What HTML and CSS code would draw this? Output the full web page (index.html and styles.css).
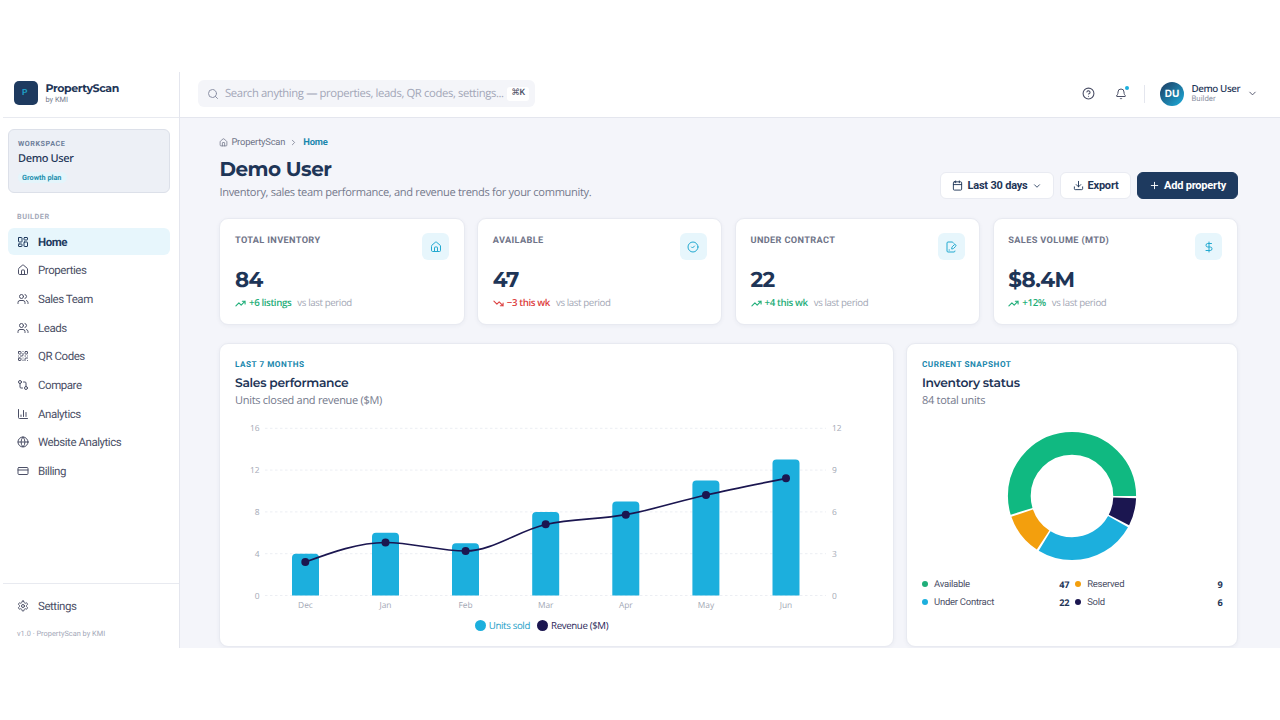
FILE: index.html
```
<!DOCTYPE html>
<html lang="en">
<head>
  <meta charset="UTF-8" />
  <meta name="viewport" content="width=device-width, initial-scale=1" />
  <title>PropertyScan - Home</title>
  <link rel="stylesheet" href="styles.css">
</head>
<body>

  <!-- Shared icons -->
  <svg class="sprite">
    <symbol id="i-dash" viewBox="0 0 24 24"><rect x="3" y="3" width="7" height="9" rx="1"/><rect x="14" y="3" width="7" height="5" rx="1"/><rect x="14" y="12" width="7" height="9" rx="1"/><rect x="3" y="16" width="7" height="5" rx="1"/></symbol>
    <symbol id="i-home" viewBox="0 0 24 24"><path d="M15 21v-8a1 1 0 0 0-1-1h-4a1 1 0 0 0-1 1v8"/><path d="M3 10a2 2 0 0 1 .7-1.5l7-6a2 2 0 0 1 2.6 0l7 6A2 2 0 0 1 21 10v9a2 2 0 0 1-2 2H5a2 2 0 0 1-2-2z"/></symbol>
    <symbol id="i-users" viewBox="0 0 24 24"><path d="M16 21v-2a4 4 0 0 0-4-4H6a4 4 0 0 0-4 4v2"/><circle cx="9" cy="7" r="4"/><path d="M22 21v-2a4 4 0 0 0-3-3.900M16 3.100a4 4 0 0 1 0 7.800"/></symbol>
    <symbol id="i-qr" viewBox="0 0 24 24"><rect x="3" y="3" width="5" height="5" rx="1"/><rect x="16" y="3" width="5" height="5" rx="1"/><rect x="3" y="16" width="5" height="5" rx="1"/><path d="M21 16h-3a2 2 0 0 0-2 2v3M21 21v.01M12 7v3a2 2 0 0 1-2 2H7M3 12h.01M12 3h.01M12 16v.01M16 12h1M21 12v.01M12 21v-1"/></symbol>
    <symbol id="i-compare" viewBox="0 0 24 24"><circle cx="18" cy="18" r="3"/><circle cx="6" cy="6" r="3"/><path d="M13 6h3a2 2 0 0 1 2 2v7M11 18H8a2 2 0 0 1-2-2V9"/></symbol>
    <symbol id="i-chart" viewBox="0 0 24 24"><path d="M3 3v16a2 2 0 0 0 2 2h16M18 17V9M13 17V5M8 17v-3"/></symbol>
    <symbol id="i-globe" viewBox="0 0 24 24"><circle cx="12" cy="12" r="10"/><path d="M12 2a14.5 14.5 0 0 0 0 20 14.5 14.5 0 0 0 0-20M2 12h20"/></symbol>
    <symbol id="i-card" viewBox="0 0 24 24"><rect x="2" y="5" width="20" height="14" rx="2"/><path d="M2 10h20"/></symbol>
    <symbol id="i-gear" viewBox="0 0 24 24"><path d="M12.2 2h-.4a2 2 0 0 0-2 2v.2a2 2 0 0 1-1 1.7l-.5.3a2 2 0 0 1-2 0l-.1-.1a2 2 0 0 0-2.7.7l-.3.4a2 2 0 0 0 .8 2.7l.1.1a2 2 0 0 1 1 1.7v.5a2 2 0 0 1-1 1.8l-.1.1a2 2 0 0 0-.8 2.7l.3.4a2 2 0 0 0 2.7.7l.1-.1a2 2 0 0 1 2 0l.5.3a2 2 0 0 1 1 1.7v.2a2 2 0 0 0 2 2h.4a2 2 0 0 0 2-2v-.2a2 2 0 0 1 1-1.7l.5-.3a2 2 0 0 1 2 0l.1.1a2 2 0 0 0 2.7-.7l.3-.4a2 2 0 0 0-.8-2.7l-.1-.1a2 2 0 0 1-1-1.8v-.5a2 2 0 0 1 1-1.7l.1-.1a2 2 0 0 0 .8-2.7l-.3-.4a2 2 0 0 0-2.7-.7l-.1.1a2 2 0 0 1-2 0l-.5-.3a2 2 0 0 1-1-1.7V4a2 2 0 0 0-2-2z"/><circle cx="12" cy="12" r="3"/></symbol>
    <symbol id="i-search" viewBox="0 0 24 24"><circle cx="11" cy="11" r="8"/><path d="m21 21-4.3-4.3"/></symbol>
    <symbol id="i-help" viewBox="0 0 24 24"><circle cx="12" cy="12" r="10"/><path d="M9.1 9a3 3 0 0 1 5.8 1c0 2-3 3-3 3M12 17h.01"/></symbol>
    <symbol id="i-bell" viewBox="0 0 24 24"><path d="M10.3 21a2 2 0 0 0 3.4 0"/><path d="M3.3 15.3A1 1 0 0 0 4 17h16a1 1 0 0 0 .7-1.7C19.4 14 18 12.5 18 8A6 6 0 0 0 6 8c0 4.5-1.4 6-2.7 7.3"/></symbol>
    <symbol id="i-down" viewBox="0 0 24 24"><path d="m6 9 6 6 6-6"/></symbol>
    <symbol id="i-right" viewBox="0 0 24 24"><path d="m9 18 6-6-6-6"/></symbol>
    <symbol id="i-cal" viewBox="0 0 24 24"><path d="M8 2v4M16 2v4M3 10h18"/><rect x="3" y="4" width="18" height="18" rx="2"/></symbol>
    <symbol id="i-export" viewBox="0 0 24 24"><path d="M21 15v4a2 2 0 0 1-2 2H5a2 2 0 0 1-2-2v-4M7 10l5 5 5-5M12 15V3"/></symbol>
    <symbol id="i-plus" viewBox="0 0 24 24"><path d="M5 12h14M12 5v14"/></symbol>
    <symbol id="i-check" viewBox="0 0 24 24"><circle cx="12" cy="12" r="10"/><path d="m9 12 2 2 4-4"/></symbol>
    <symbol id="i-sign" viewBox="0 0 24 24"><path d="m18 5-2.4-2.4A2 2 0 0 0 14.2 2H6a2 2 0 0 0-2 2v16a2 2 0 0 0 2 2h12a2 2 0 0 0 2-2"/><path d="M21.4 10.6a1 1 0 0 0-3-3l-4 4a2 2 0 0 0-.5.9l-.8 2.9a.5.5 0 0 0 .6.6l2.9-.8a2 2 0 0 0 .9-.5z"/><path d="M8 18h1"/></symbol>
    <symbol id="i-dollar" viewBox="0 0 24 24"><path d="M12 2v20M17 5H9.5a3.5 3.5 0 0 0 0 7h5a3.5 3.5 0 0 1 0 7H6"/></symbol>
    <symbol id="i-up" viewBox="0 0 24 24"><path d="m22 7-8.5 8.5-5-5L2 17M16 7h6v6"/></symbol>
    <symbol id="i-fall" viewBox="0 0 24 24"><path d="m22 17-8.5-8.5-5 5L2 7M16 17h6v-6"/></symbol>
  </svg>

  <div class="app">
    <aside class="sidebar">
      <div class="brand">
        <div class="logo">P</div>
        <div>
          <div class="brand-name">PropertyScan</div>
          <div class="brand-by">by KMI</div>
        </div>
      </div>

      <div class="workspace">
        <div class="ws-label">WORKSPACE</div>
        <div class="ws-name">Demo User</div>
        <span class="ws-plan">Growth plan</span>
      </div>

      <div class="nav-label">BUILDER</div>
      <nav>
        <a class="active"><svg><use href="#i-dash"/></svg>Home</a>
        <a><svg><use href="#i-home"/></svg>Properties</a>
        <a><svg><use href="#i-users"/></svg>Sales Team</a>
        <a><svg><use href="#i-users"/></svg>Leads</a>
        <a><svg><use href="#i-qr"/></svg>QR Codes</a>
        <a><svg><use href="#i-compare"/></svg>Compare</a>
        <a><svg><use href="#i-chart"/></svg>Analytics</a>
        <a><svg><use href="#i-globe"/></svg>Website Analytics</a>
        <a><svg><use href="#i-card"/></svg>Billing</a>
      </nav>

      <div class="side-foot">
        <nav><a><svg><use href="#i-gear"/></svg>Settings</a></nav>
        <p>v1.0 · PropertyScan by KMI</p>
      </div>
    </aside>

    <div class="page">
      <header class="topbar">
        <div class="search">
          <svg><use href="#i-search"/></svg>
          <span>Search anything — properties, leads, QR codes, settings...</span>
          <kbd>⌘K</kbd>
        </div>
        <div class="top-right">
          <svg class="help"><use href="#i-help"/></svg>
          <div class="bell"><svg><use href="#i-bell"/></svg><i></i></div>
          <div class="sep"></div>
          <div class="avatar">DU</div>
          <div class="user">
            <div class="user-name">Demo User</div>
            <div class="user-role">Builder</div>
          </div>
          <svg class="caret"><use href="#i-down"/></svg>
        </div>
      </header>

      <main>
        <div class="crumbs">
          <svg><use href="#i-home"/></svg><span>PropertyScan</span>
          <svg class="crumb-sep"><use href="#i-right"/></svg><b>Home</b>
        </div>

        <div class="head">
          <div>
            <h1>Demo User</h1>
            <p>Inventory, sales team performance, and revenue trends for your community.</p>
          </div>
          <div class="actions">
            <button class="range"><svg><use href="#i-cal"/></svg>Last 30 days<svg class="small"><use href="#i-down"/></svg></button>
            <button class="export"><svg><use href="#i-export"/></svg>Export</button>
            <button class="primary"><svg><use href="#i-plus"/></svg>Add property</button>
          </div>
        </div>

        <div class="stats">
          <div class="card stat">
            <div class="stat-top"><h3>TOTAL INVENTORY</h3><div class="stat-icon"><svg><use href="#i-home"/></svg></div></div>
            <div class="value">84</div>
            <div class="trend"><svg><use href="#i-up"/></svg><b>+6 listings</b><span>vs last period</span></div>
          </div>
          <div class="card stat">
            <div class="stat-top"><h3>AVAILABLE</h3><div class="stat-icon"><svg><use href="#i-check"/></svg></div></div>
            <div class="value">47</div>
            <div class="trend down"><svg><use href="#i-fall"/></svg><b>−3 this wk</b><span>vs last period</span></div>
          </div>
          <div class="card stat">
            <div class="stat-top"><h3>UNDER CONTRACT</h3><div class="stat-icon"><svg><use href="#i-sign"/></svg></div></div>
            <div class="value">22</div>
            <div class="trend"><svg><use href="#i-up"/></svg><b>+4 this wk</b><span>vs last period</span></div>
          </div>
          <div class="card stat">
            <div class="stat-top"><h3>SALES VOLUME (MTD)</h3><div class="stat-icon"><svg><use href="#i-dollar"/></svg></div></div>
            <div class="value">$8.4M</div>
            <div class="trend"><svg><use href="#i-up"/></svg><b>+12%</b><span>vs last period</span></div>
          </div>
        </div>

        <div class="charts">
          <section class="card panel">
            <div class="eyebrow">LAST 7 MONTHS</div>
            <h2>Sales performance</h2>
            <p>Units closed and revenue ($M)</p>
            <svg class="combo" viewBox="235 418 644 196">
              <g class="grid">
                <path d="M265 428.3H826M265 470.1H826M265 511.9H826M265 553.7H826M265 595.5H826"/>
              </g>
              <g class="bars">
                <path d="M292 595.5V557.7q0-4 4-4h19q4 0 4 4v37.8z"/>
                <path d="M372 595.5V536.8q0-4 4-4h19q4 0 4 4v58.7z"/>
                <path d="M452 595.5V547.3q0-4 4-4h19q4 0 4 4v48.2z"/>
                <path d="M532.2 595.5V515.9q0-4 4-4h19q4 0 4 4v79.6z"/>
                <path d="M612.3 595.5V505.4q0-4 4-4h19q4 0 4 4v90.1z"/>
                <path d="M692.4 595.5V484.5q0-4 4-4h19q4 0 4 4v111z"/>
                <path d="M772.5 595.5V463.6q0-4 4-4h19q4 0 4 4v131.9z"/>
              </g>
              <path class="line" d="M305.3 562C332 552.2 358.8 542.5 385.5 542.5C412.2 542.5 438.9 551 465.6 551C492.3 551 519 530.5 545.7 524.5C572.4 518.4 599.1 519.6 625.8 514.7C652.5 509.8 679.2 501 706 495C732.7 489 759.4 483.7 786 478.4"/>
              <g class="dots">
                <circle cx="305.3" cy="562" r="4"/><circle cx="385.5" cy="542.5" r="4"/><circle cx="465.6" cy="551" r="4"/><circle cx="545.7" cy="524.3" r="4"/><circle cx="625.8" cy="514.7" r="4"/><circle cx="706" cy="495" r="4"/><circle cx="786" cy="478.3" r="4"/>
              </g>
              <g class="axis end">
                <text x="259.5" y="431.3">16</text><text x="259.5" y="473.1">12</text><text x="259.5" y="514.9">8</text><text x="259.5" y="556.7">4</text><text x="259.5" y="598.5">0</text>
              </g>
              <g class="axis">
                <text x="832" y="431.3">12</text><text x="832" y="473.1">9</text><text x="832" y="514.9">6</text><text x="832" y="556.7">3</text><text x="832" y="598.5">0</text>
              </g>
              <g class="axis mid">
                <text x="305.5" y="607.5">Dec</text><text x="385.5" y="607.5">Jan</text><text x="465.6" y="607.5">Feb</text><text x="545.7" y="607.5">Mar</text><text x="625.8" y="607.5">Apr</text><text x="706" y="607.5">May</text><text x="786" y="607.5">Jun</text>
              </g>
            </svg>
            <div class="chart-legend"><i class="blue"></i><span class="units">Units sold</span><i class="navy"></i><span>Revenue ($M)</span></div>
          </section>

          <section class="card panel">
            <div class="eyebrow">CURRENT SNAPSHOT</div>
            <h2>Inventory status</h2>
            <p>84 total units</p>
            <!-- arc lengths in degrees, 2 degrees between slices -->
            <svg class="donut" viewBox="-66 -66 132 132">
              <circle class="s-sold" r="52.7" pathLength="360" stroke-dasharray="25.1 334.9" stroke-dashoffset="-2"/>
              <circle class="s-under" r="52.7" pathLength="360" stroke-dasharray="92.2 267.8" stroke-dashoffset="-29.1"/>
              <circle class="s-res" r="52.7" pathLength="360" stroke-dasharray="37.7 322.3" stroke-dashoffset="-123.3"/>
              <circle class="s-avail" r="52.7" pathLength="360" stroke-dasharray="197 163" stroke-dashoffset="-163"/>
            </svg>
            <div class="legend">
              <div><i class="green"></i>Available<b>47</b></div>
              <div><i class="amber"></i>Reserved<b>9</b></div>
              <div><i class="blue"></i>Under Contract<b>22</b></div>
              <div><i class="navy"></i>Sold<b>6</b></div>
            </div>
          </section>
        </div>
      </main>
    </div>
  </div>

</body>
</html>
```
FILE: styles.css
```
* {
  box-sizing: border-box;
}
body {
  margin: 0;
  padding: 72px 0 0 3px;
  height: 720px;
  overflow: hidden;
  background: #fff;
  font-family: "Open Sans", "Noto Sans", sans-serif;
  color: #1e3557;
  text-rendering: geometricPrecision;
}
h1, h2, h3, p {
  margin: 0;
}
svg {
  fill: none;
  stroke: currentColor;
  stroke-width: 2;
  stroke-linecap: round;
  stroke-linejoin: round;
  flex: none;
}
.sprite {
  position: absolute;
  width: 0;
  height: 0;
}
.app {
  display: flex;
  height: 576px;
  overflow: hidden;
}

/* Sidebar */
.sidebar {
  width: 177px;
  flex: none;
  display: flex;
  flex-direction: column;
  border-right: 1px solid #e4e6ee;
  font-family: Roboto, sans-serif;
}
.brand {
  height: 46px;
  display: flex;
  gap: 7.5px;
  padding: 9px 0 0 11px;
  border-bottom: 1px solid #e8eaf0;
}
.logo {
  width: 24px;
  height: 24px;
  border-radius: 5px;
  background: #1e3a5f;
  color: #1f9fc4;
  font-size: 8.5px;
  font-weight: 700;
  line-height: 24px;
  padding-left: 8px;
}
.brand-name {
  font: 700 11px/14px Montserrat, Inter, sans-serif;
  letter-spacing: -0.4px;
}
.brand-by {
  font-size: 7.4px;
  line-height: 9px;
  color: #74798c;
}
.workspace {
  height: 64px;
  margin: 11px 9px 0 5px;
  padding: 9px 9px 0;
  border: 1px solid #dce0e9;
  border-radius: 6px;
  background: #edf0f6;
}
.ws-label {
  font-size: 7.2px;
  line-height: 9px;
  font-weight: 700;
  letter-spacing: 0.55px;
  color: #6e7f9b;
}
.ws-name {
  font: 500 11px/16px "Noto Sans", sans-serif;
  letter-spacing: -0.35px;
  margin-top: 3px;
}
.ws-plan {
  display: block;
  width: 49px;
  margin-top: 5px;
  padding-left: 4px;
  border-radius: 6px;
  background: #e4f5fb;
  font-size: 7.3px;
  line-height: 11px;
  font-weight: 700;
  color: #1d8fae;
  white-space: nowrap;
}
.nav-label {
  margin: 19px 0 7px 14px;
  font-size: 7.3px;
  line-height: 9px;
  font-weight: 700;
  letter-spacing: 0.5px;
  color: #a3a8b8;
}
nav {
  display: flex;
  flex-direction: column;
  gap: 1.7px;
  padding: 0 9px 0 5px;
}
nav a {
  height: 27px;
  display: flex;
  align-items: center;
  gap: 9px;
  padding-left: 9px;
  border-radius: 6px;
  font-size: 11.5px;
  line-height: 14px;
  letter-spacing: -0.45px;
  color: #4b4f66;
}
nav svg {
  width: 12px;
  height: 12px;
}
nav a.active {
  background: #e7f6fc;
  color: #1e3a5f;
  font-weight: 700;
}
.side-foot {
  height: 65px;
  margin-top: auto;
  padding-top: 8px;
  border-top: 1px solid #e8eaf0;
}
.side-foot p {
  margin: 10px 0 0 14px;
  font-size: 7.4px;
  line-height: 10px;
  color: #a3a8b8;
}

/* Top bar */
.page {
  flex: 1;
  min-width: 0;
  background: #f4f5fa;
}
.topbar {
  height: 46px;
  display: flex;
  justify-content: space-between;
  padding: 8px 22px 0 18px;
  background: #fff;
  border-bottom: 1px solid #e4e6ee;
}
.search {
  width: 337px;
  height: 27px;
  display: flex;
  align-items: center;
  padding: 0 6px 0 9px;
  border-radius: 6px;
  background: #f4f5f9;
  font-size: 11.3px;
  letter-spacing: -0.39px;
  color: #a3a7b8;
  white-space: nowrap;
}
.search svg {
  width: 12px;
  height: 12px;
  margin-right: 6px;
  color: #8d92a6;
}
.search kbd {
  flex: none;
  width: 22px;
  height: 14px;
  margin-left: auto;
  border-radius: 3px;
  background: #fff;
  font: 500 8.8px/13px Roboto, "DejaVu Sans", sans-serif;
  text-align: center;
  color: #4b4f66;
}
.top-right {
  display: flex;
  align-items: center;
  height: 27px;
  color: #4b4f66;
}
.help {
  width: 13px;
  height: 13px;
}
.bell {
  position: relative;
  width: 12px;
  height: 12px;
  margin: 0 17px 0 20px;
}
.bell svg {
  display: block;
  width: 12px;
  height: 12px;
}
.bell i {
  position: absolute;
  top: -2px;
  right: -2px;
  width: 4px;
  height: 4px;
  border-radius: 50%;
  background: #1cafdd;
}
.sep {
  width: 1px;
  height: 18px;
  background: #e4e6ee;
}
.avatar {
  width: 24px;
  height: 24px;
  margin: 0 7.5px 0 15px;
  border-radius: 50%;
  background: linear-gradient(135deg, #1e3a5f, #1cafdd);
  color: #fff;
  font: 700 10px/24px Inter, sans-serif;
  text-align: center;
}
.user {
  width: 54px;
  white-space: nowrap;
}
.user-name {
  font: 500 9.8px/11px "Noto Sans", sans-serif;
  letter-spacing: -0.4px;
  color: #1e3557;
}
.user-role {
  font: 7.8px/10px Roboto, sans-serif;
  color: #8a8fa2;
}
.caret {
  width: 11px;
  height: 11px;
  margin-left: 1.5px;
}

/* Page head */
main {
  padding: 19px 42px 0 39.4px;
}
.crumbs {
  height: 12px;
  display: flex;
  align-items: center;
  font: 9.4px/12px Roboto, sans-serif;
  letter-spacing: -0.2px;
  color: #6f7488;
}
.crumbs svg {
  width: 9px;
  height: 9px;
  margin: -1px 3px 0 0;
}
.crumbs .crumb-sep {
  margin: -1px 5px 0 4px;
}
.crumbs b {
  color: #1a87ad;
}
.head {
  height: 68.5px;
  display: flex;
  justify-content: space-between;
}
h1 {
  margin-top: 9px;
  font: 700 20px/24px Montserrat, Inter, sans-serif;
  letter-spacing: -0.5px;
}
.head p {
  margin-top: 3px;
  font-size: 11.1px;
  line-height: 16px;
  letter-spacing: -0.33px;
  color: #74798c;
}
.actions {
  display: flex;
  gap: 6px;
  padding-top: 23px;
}
button {
  height: 27px;
  display: flex;
  align-items: center;
  justify-content: center;
  gap: 4px;
  padding: 0;
  border: 1px solid #e9ebf2;
  border-radius: 6px;
  background: #fff;
  color: #1e3557;
  font: 700 11px/14px Roboto, sans-serif;
  letter-spacing: -0.2px;
}
button svg {
  width: 11px;
  height: 11px;
}
button .small {
  width: 10px;
  height: 10px;
}
.range {
  width: 114px;
}
.export {
  width: 71px;
}
.primary {
  width: 101px;
  background: #1e3a5f;
  border-color: #1e3a5f;
  color: #fff;
}

/* Cards */
.card {
  background: #fff;
  border: 1px solid #e8eaf1;
  border-radius: 9px;
  box-shadow: 0 1px 4px rgba(30, 50, 90, 0.05);
}
.stats {
  display: grid;
  grid-template-columns: repeat(4, 1fr);
  gap: 12.5px;
}
.stat {
  height: 107px;
  padding: 14.5px 14.6px;
}
.stat-top {
  display: flex;
  justify-content: space-between;
  height: 33px;
}
h3 {
  padding-top: 1px;
  font: 700 9.2px/13px Roboto, sans-serif;
  letter-spacing: 0.35px;
  color: #6f7488;
}
.stat-icon {
  width: 27px;
  height: 27px;
  display: flex;
  align-items: center;
  justify-content: center;
  border-radius: 6px;
  background: #e7f6fc;
  color: #22a9d0;
}
.stat-icon svg {
  width: 12px;
  height: 12px;
}
.value {
  font: 700 21.5px/29px Montserrat, Inter, sans-serif;
  letter-spacing: -0.6px;
}
.trend {
  display: flex;
  align-items: center;
  margin-top: 1px;
  font-size: 9.7px;
  line-height: 14px;
  letter-spacing: -0.38px;
  color: #1fae79;
}
.trend svg {
  width: 11px;
  height: 11px;
  margin-right: 3px;
  stroke-width: 2.4;
}
.trend b {
  font-weight: 600;
}
.trend span {
  margin-left: 6px;
  color: #a3a7b5;
}
.down {
  color: #dc4040;
}

/* Charts */
.charts {
  display: grid;
  grid-template-columns: 675px 1fr;
  gap: 12px;
  margin-top: 18.5px;
}
.panel {
  height: 304px;
  padding: 16px 14.6px 0;
}
.eyebrow {
  font: 700 8.2px/11px Roboto, sans-serif;
  letter-spacing: 0.5px;
  color: #1a87ad;
}
h2 {
  margin-top: 4.5px;
  font: 600 12.3px/16px Montserrat, Inter, sans-serif;
  letter-spacing: -0.3px;
}
.panel p {
  margin-top: 1.5px;
  font-size: 11px;
  line-height: 15px;
  letter-spacing: -0.28px;
  color: #74798c;
}
.combo {
  display: block;
  width: 644px;
  height: 196px;
  margin-top: 10px;
}
.grid {
  stroke: #eceef3;
  stroke-width: 1;
  stroke-dasharray: 2.5 2.5;
  stroke-linecap: butt;
}
.bars {
  fill: #1cafdd;
  stroke: none;
}
.line {
  stroke: #1b1650;
  stroke-width: 1.7;
}
.dots {
  fill: #1b1650;
  stroke: none;
}
.axis {
  fill: #a3a8b5;
  stroke: none;
  font-size: 8.4px;
}
.end {
  text-anchor: end;
}
.mid {
  text-anchor: middle;
}
.chart-legend {
  display: flex;
  align-items: center;
  width: 613px;
  justify-content: center;
  margin-top: 4.5px;
  font-size: 9.7px;
  line-height: 14px;
  letter-spacing: -0.36px;
  color: #2a2759;
}
.chart-legend i {
  width: 11px;
  height: 11px;
  margin-right: 3px;
  border-radius: 50%;
}
.units {
  margin-right: 7px;
  color: #1d9ec7;
}
.donut {
  display: block;
  width: 132px;
  height: 132px;
  margin: 22px auto 15.5px;
  stroke-width: 22.8;
  stroke-linecap: butt;
}
.s-sold { stroke: #1b1650; }
.s-under { stroke: #1cafdd; }
.s-res { stroke: #f39f0d; }
.s-avail { stroke: #10b981; }
.legend {
  display: grid;
  grid-template-columns: 1fr 1fr;
  column-gap: 6px;
  row-gap: 4px;
  font: 9.5px/14px Roboto, sans-serif;
  letter-spacing: -0.25px;
  color: #4b4f66;
}
.legend div {
  display: flex;
  align-items: center;
}
.legend i {
  width: 6px;
  height: 6px;
  margin: -1px 6px 0 0;
  border-radius: 50%;
}
.legend b {
  margin-left: auto;
  font-family: "Noto Sans", sans-serif;
  font-size: 9.2px;
  color: #1e3557;
}
.blue { background: #1cafdd; }
.navy { background: #1b1650; }
.green { background: #1fae79; }
.amber { background: #f39f0d; }
```
